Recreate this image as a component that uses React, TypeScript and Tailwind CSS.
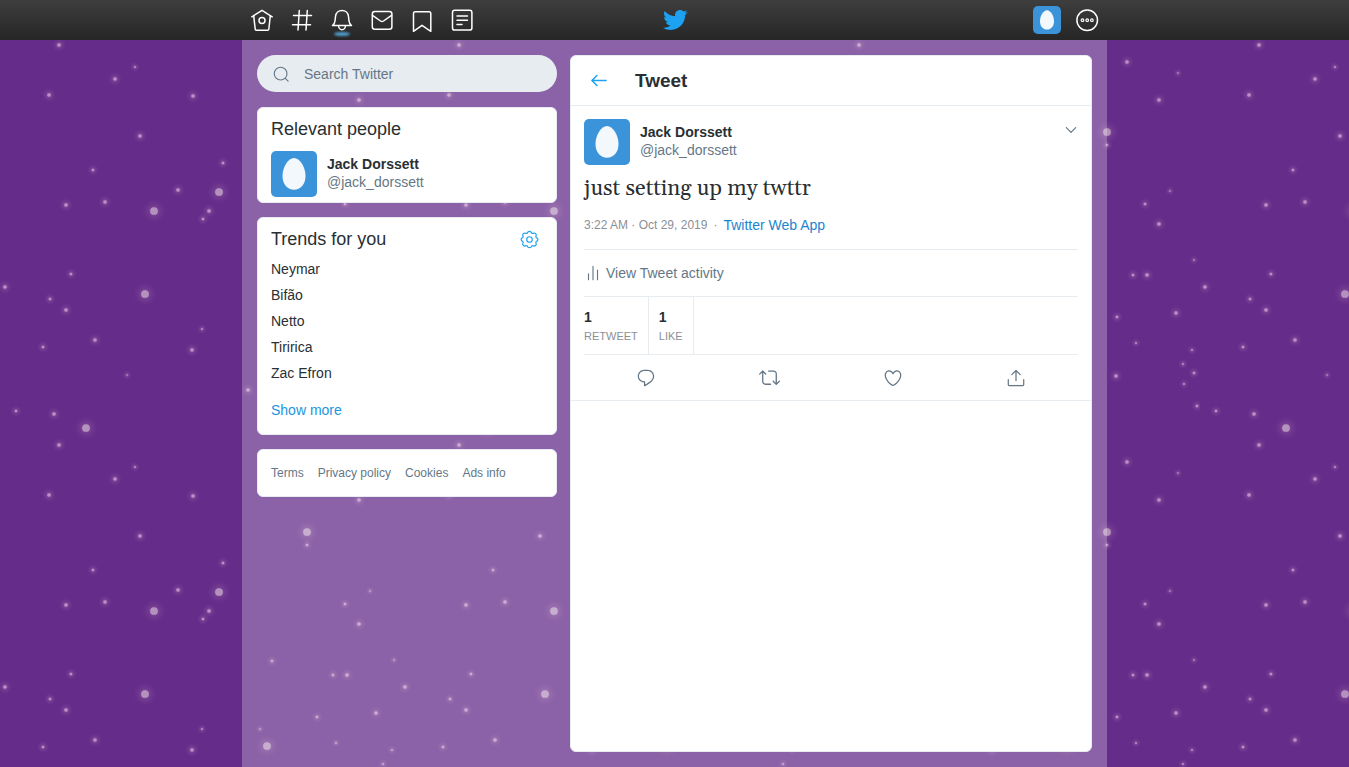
import type { ReactNode } from "react";

const STARS: [number, number, number][] = [
  [59, 45, 2], [135, 67, 1], [115, 79, 2], [49, 95, 2], [193, 96, 2], [140, 136, 2],
  [223, 163, 1.5], [93, 170, 1.5], [178, 190, 2], [219, 192, 4.3], [66, 205, 2],
  [105, 202, 2], [154, 211, 4.3], [209, 211, 2], [203, 219, 1.5], [71, 274, 1.5],
  [5, 287, 2], [145, 294, 4.3], [50, 299, 1.5], [66, 310, 2], [202, 329, 1],
  [95, 340, 2], [43, 347, 1.5], [192, 350, 2], [127, 375, 0.8], [16, 11, 1.5],
  [54, 14, 2], [86, 28, 4.3], [327, 62, 2], [378, 73, 0.8], [359, 100, 2],
  [307, 132, 4.3], [307, 145, 1.5], [370, 191, 0.8], [345, 204, 1.5], [359, 224, 2],
  [394, 260, 0.8], [333, 275, 1.5], [347, 275, 2], [317, 317, 1.5], [376, 313, 2],
  [336, 343, 1], [392, 350, 1], [383, 364, 1], [394, 373, 1.5], [384, 384, 1],
  [316, 376, 2], [397, 6, 1.5], [272, 261, 1.5], [260, 329, 0.8], [267, 346, 4.3],
  [248, 390, 2],
];

function StarField() {
  return (
    <svg aria-hidden="true" className="absolute inset-0 h-full w-full">
      <defs>
        <radialGradient id="glow">
          <stop offset="0" stopColor="#c89fc8" stopOpacity="0.55" />
          <stop offset="0.45" stopColor="#b07fb0" stopOpacity="0.18" />
          <stop offset="1" stopColor="#a070a0" stopOpacity="0" />
        </radialGradient>
        <pattern id="stars" width="400" height="400" patternUnits="userSpaceOnUse">
          {STARS.map(([x, y, r]) => (
            <g key={`${x}-${y}`}>
              <circle cx={x} cy={y} r={r * 2 + 3} fill="url(#glow)" />
              <circle cx={x} cy={y} r={r * 0.9} fill={r > 3 ? "#b592be" : "#bd8ec9"} />
            </g>
          ))}
        </pattern>
      </defs>
      <rect width="100%" height="100%" fill="url(#stars)" />
    </svg>
  );
}

function Line({ children, className, width = 1.5 }: { children: ReactNode; className: string; width?: number }) {
  return (
    <svg viewBox="0 0 24 24" aria-hidden="true" className={className} fill="none" stroke="currentColor" strokeWidth={width} strokeLinecap="round" strokeLinejoin="round">
      {children}
    </svg>
  );
}

function Solid({ d, className }: { d: string; className: string }) {
  return (
    <svg viewBox="0 0 24 24" aria-hidden="true" className={className} fill="currentColor">
      <path d={d} />
    </svg>
  );
}

const BIRD =
  "M23.643 4.937c-.835.37-1.732.62-2.675.733.962-.576 1.7-1.49 2.048-2.578-.9.534-1.897.922-2.958 1.13-.85-.904-2.06-1.47-3.4-1.47-2.572 0-4.658 2.086-4.658 4.66 0 .364.042.718.12 1.06-3.873-.195-7.304-2.05-9.602-4.868-.4.69-.63 1.49-.63 2.342 0 1.616.823 3.043 2.072 3.878-.764-.025-1.482-.234-2.11-.583v.06c0 2.257 1.605 4.14 3.737 4.568-.392.106-.803.162-1.227.162-.3 0-.593-.028-.877-.082.593 1.85 2.313 3.198 4.352 3.234-1.595 1.25-3.604 1.995-5.786 1.995-.376 0-.747-.022-1.112-.065 2.062 1.323 4.51 2.093 7.14 2.093 8.57 0 13.255-7.098 13.255-13.254 0-.2-.005-.402-.014-.602.91-.658 1.7-1.477 2.323-2.41z";
const REPLY =
  "M14.046 2.242l-4.148-.01h-.002c-4.374 0-7.8 3.427-7.8 7.802 0 4.098 3.186 7.206 7.465 7.37v3.828c0 .108.044.286.12.403.142.225.384.347.632.347.138 0 .277-.038.402-.118.264-.168 6.473-4.14 8.088-5.506 1.902-1.61 3.04-3.97 3.043-6.312v-.017c-.006-4.367-3.43-7.787-7.8-7.788zm3.787 12.972c-1.134.96-4.862 3.405-6.772 4.643V16.67c0-.414-.335-.75-.75-.75h-.396c-3.66 0-6.318-2.476-6.318-5.886 0-3.534 2.768-6.302 6.3-6.302l4.147.01h.002c3.532 0 6.3 2.766 6.302 6.296-.003 1.91-.942 3.844-2.514 5.176z";
const RETWEET =
  "M23.77 15.67c-.292-.293-.767-.293-1.06 0l-2.22 2.22V7.65c0-2.068-1.683-3.75-3.75-3.75h-5.85c-.414 0-.75.336-.75.75s.336.75.75.75h5.85c1.24 0 2.25 1.01 2.25 2.25v10.24l-2.22-2.22c-.293-.293-.768-.293-1.06 0s-.294.768 0 1.06l3.5 3.5c.145.147.337.22.53.22s.383-.072.53-.22l3.5-3.5c.294-.292.294-.767 0-1.06zm-10.66 3.28H7.26c-1.24 0-2.25-1.01-2.25-2.25V6.46l2.22 2.22c.148.147.34.22.532.22s.384-.073.53-.22c.293-.293.293-.768 0-1.06l-3.5-3.5c-.293-.294-.768-.294-1.06 0l-3.5 3.5c-.294.292-.294.767 0 1.06s.767.293 1.06 0l2.22-2.22V16.7c0 2.068 1.683 3.75 3.75 3.75h5.85c.414 0 .75-.336.75-.75s-.337-.75-.75-.75z";
const HEART =
  "M12 21.638h-.014C9.403 21.59 1.95 14.856 1.95 8.478c0-3.064 2.525-5.754 5.403-5.754 2.29 0 3.83 1.58 4.646 2.73.814-1.148 2.354-2.73 4.645-2.73 2.88 0 5.404 2.69 5.404 5.755 0 6.376-7.454 13.11-10.037 13.157H12zM7.354 4.225c-2.08 0-3.903 1.988-3.903 4.255 0 5.74 7.034 11.596 8.55 11.658 1.518-.062 8.55-5.917 8.55-11.658 0-2.267-1.823-4.255-3.903-4.255-2.528 0-3.94 2.936-3.952 2.965-.23.562-1.156.562-1.387 0-.014-.03-1.425-2.965-3.954-2.965z";
const SHARE =
  "M17.53 7.47l-5-5c-.293-.293-.768-.293-1.06 0l-5 5c-.294.293-.294.768 0 1.06s.767.294 1.06 0l3.72-3.72V15c0 .414.336.75.75.75s.75-.336.75-.75V4.81l3.72 3.72c.146.147.338.22.53.22s.384-.072.53-.22c.293-.293.293-.767 0-1.06zM19.708 21.944H4.292C3.028 21.944 2 20.916 2 19.652V14c0-.414.336-.75.75-.75s.75.336.75.75v5.652c0 .437.355.792.792.792h15.416c.437 0 .792-.355.792-.792V14c0-.414.336-.75.75-.75s.75.336.75.75v5.652c0 1.264-1.028 2.292-2.292 2.292z";

function Egg({ className }: { className: string }) {
  return (
    <svg viewBox="0 0 46 46" aria-hidden="true" className={className}>
      <rect width="46" height="46" fill="#3b94d9" />
      <path d="M23 7C28.500 7 34.500 15.500 34.500 25C34.500 33.500 29.500 38.700 23 38.700C16.500 38.700 11.500 33.500 11.500 25C11.500 15.500 17.500 7 23 7Z" fill="#f3f8fd" />
    </svg>
  );
}

const NAV: { label: string; active?: boolean; icon: ReactNode }[] = [
  {
    label: "Home",
    icon: (
      <>
        <path d="M1.800 8.800 12 2.300l10.200 6.500" />
        <path d="M3.700 7.800 5.200 21.200q.1 1 1.100 1h11.400q1 0 1.100-1L20.300 7.800" />
        <circle cx="12" cy="12.600" r="3" />
      </>
    ),
  },
  { label: "Explore", icon: <path d="M3.500 7.500h18M2.500 16.800h18M9.300 2.500 8 22M17.300 2.500 16 22" /> },
  {
    label: "Notifications",
    active: true,
    icon: (
      <>
        <path d="M2.500 17.600h19c-1.700-1.400-2.300-2.600-2.500-4.600l-.5-4.500C18.100 4.900 15.400 2.500 12 2.500S5.900 4.900 5.500 8.500L5 13c-.2 2-.8 3.200-2.500 4.600Z" />
        <path d="M8.600 17.800a3.400 4 0 0 0 6.800 0" />
      </>
    ),
  },
  {
    label: "Messages",
    icon: (
      <>
        <rect x="2.300" y="3.500" width="19.600" height="17.800" rx="2.500" />
        <path d="m2.500 7.300 8 5.700q1.500 1 3 0l8-5.700" />
      </>
    ),
  },
  { label: "Bookmarks", icon: <path d="M5.200 3.800h13.800q1.800 0 1.800 1.800V23.300L12 17.300 3.500 23.300V5.600q0-1.800 1.700-1.800Z" /> },
  {
    label: "Lists",
    icon: (
      <>
        <rect x="2.500" y="2.300" width="19.400" height="19.800" rx="2.200" />
        <path d="M7 8h10.500M7 12.300h10.500M7 16.600h5" />
      </>
    ),
  },
];

function Person() {
  return (
    <a href="#profile" className="flex gap-2.5">
      <Egg className="h-[46px] w-[46px] shrink-0 rounded-[5px]" />
      <span className="flex flex-col pt-1 text-sm leading-[18px]">
        <span className="font-bold text-[#292f33]">Jack Dorssett</span>
        <span className="text-[#657786]">@jack_dorssett</span>
      </span>
    </a>
  );
}

function Card({ children, className }: { children: ReactNode; className: string }) {
  return <section className={`rounded-md border border-[#e6ecf0] bg-white px-[13px] ${className}`}>{children}</section>;
}

export default function App() {
  return (
    <div className="relative flex min-h-screen flex-col bg-[#652c8a] font-['Liberation_Sans',Arial,sans-serif] text-sm text-[#292f33]">
      <StarField />

      <header className="relative h-10 bg-linear-to-b from-[#3e3e3e] to-[#262626] text-white">
        <div className="mx-auto grid h-full max-w-[865px] grid-cols-[1fr_auto_1fr] items-center">
          <nav aria-label="Main" className="flex">
            {NAV.map((item) => (
              <a key={item.label} href={`#${item.label.toLowerCase()}`} aria-label={item.label} className="relative flex h-10 w-10 items-center justify-center">
                <Line className="h-6 w-6">{item.icon}</Line>
                {item.active && <span className="absolute bottom-1 h-1 w-4 rounded-[50%] bg-[#4f9bcb] blur-[1px]" />}
              </a>
            ))}
          </nav>
          <a href="#twitter" aria-label="Twitter">
            <Solid d={BIRD} className="h-[26px] w-[26px] text-[#1da1f2]" />
          </a>
          <div className="flex justify-end">
            <button type="button" aria-label="Account" className="flex h-10 w-10 items-center justify-center">
              <Egg className="h-7 w-7 rounded-[5px]" />
            </button>
            <button type="button" aria-label="More" className="flex h-10 w-10 items-center justify-center">
              <Line className="h-6 w-6">
                <circle cx="12.200" cy="12.200" r="10.300" />
                <g strokeWidth="1.200">
                  <circle cx="7.500" cy="12.200" r="1.300" />
                  <circle cx="12.200" cy="12.200" r="1.300" />
                  <circle cx="16.900" cy="12.200" r="1.300" />
                </g>
              </Line>
            </button>
          </div>
        </div>
      </header>

      <div className="relative mx-auto flex w-full max-w-[865px] flex-1 gap-[13px] bg-white/25 p-[15px]">
        <aside className="flex w-[300px] shrink-0 flex-col gap-3.5">
          <label className="mb-px flex h-[37px] items-center gap-3.5 rounded-full bg-[#e6ecf0] px-[15px] text-[#657786]">
            <Line className="h-[18px] w-[18px] shrink-0">
              <circle cx="11.500" cy="11.500" r="8.500" />
              <path d="m17.800 17.800 3.700 3.700" />
            </Line>
            <input type="search" aria-label="Search Twitter" placeholder="Search Twitter" className="min-w-0 flex-1 bg-transparent outline-none placeholder:text-[#657786]" />
          </label>

          <Card className="pt-[9px] pb-[5px]">
            <h2 className="mb-2.5 text-lg leading-6">Relevant people</h2>
            <Person />
          </Card>

          <Card className="pt-[9px] pb-3">
            <div className="mb-[5px] flex items-center justify-between pr-1">
              <h2 className="text-lg leading-6">Trends for you</h2>
              <button type="button" aria-label="Trend settings" className="text-[#1da1f2]">
                <Line className="h-[19px] w-[19px]">
                  <path d="M10 2.500q2-1.600 4 0l.8 1.500q.7.500 1.600.300l1.700-.5q2.300.200 2.500 2.500l-.5 1.700q-.1.900.4 1.500l1.400.9q1.300 1.600 0 3.300l-1.400.9q-.6.700-.4 1.600l.5 1.700q-.3 2.200-2.500 2.400l-1.700-.5q-.9-.1-1.600.4l-.8 1.400q-2 1.500-4 0l-.8-1.400q-.7-.5-1.600-.4l-1.700.5q-2.200-.2-2.500-2.400l.5-1.700q.2-.9-.4-1.600l-1.400-.9q-1.300-1.700 0-3.300l1.400-.9q.6-.6.4-1.500l-.5-1.700q.2-2.300 2.500-2.500l1.700.5q.9.200 1.600-.3Z" />
                  <circle cx="12" cy="12" r="3.500" />
                </Line>
              </button>
            </div>
            <ul>
              {["Neymar", "Bifão", "Netto", "Tiririca", "Zac Efron"].map((trend) => (
                <li key={trend}>
                  <a href="#trend" className="leading-[26px]">{trend}</a>
                </li>
              ))}
            </ul>
            <a href="#trends" className="mt-3 block leading-6 text-[#1b95e0]">Show more</a>
          </Card>

          <Card className="flex gap-3.5 py-[13px] text-xs leading-5 text-[#657786]">
            <a href="#terms">Terms</a>
            <a href="#privacy">Privacy policy</a>
            <a href="#cookies">Cookies</a>
            <a href="#ads">Ads info</a>
          </Card>
        </aside>

        <main className="min-w-0 flex-1 rounded-md border border-[#e6ecf0] bg-white">
          <div className="flex h-[50px] items-center gap-[26px] border-b border-[#e6ecf0] px-[18px]">
            <button type="button" aria-label="Back" className="text-[#1da1f2]">
              <Line className="h-5 w-5" width={1.8}>
                <path d="M20.500 11.500H3.500M9.500 5.500l-6 6 6 6" />
              </Line>
            </button>
            <h1 className="text-[19px] font-bold">Tweet</h1>
          </div>

          <article className="border-b border-[#e6ecf0] px-[13px] pt-[13px]">
            <div className="flex items-start justify-between">
              <Person />
              <button type="button" aria-label="Tweet options" className="mt-1 text-[#657786]">
                <Line className="h-3.5 w-3.5" width={2}>
                  <path d="m4 8 8 8 8-8" />
                </Line>
              </button>
            </div>
            <p className="mt-2 font-[Georgia,Gelasio,'Liberation_Serif',serif] text-[22px] leading-8">just setting up my twttr</p>
            <p className="mt-2.5 mb-3.5 flex items-center gap-1.5 text-xs leading-5 text-[#8a9096]">
              <span>3:22 AM · Oct 29, 2019</span>
              <span>·</span>
              <a href="#source" className="text-sm text-[#1b85d0]">Twitter Web App</a>
            </p>
            <a href="#activity" className="flex h-[47px] items-center gap-1 border-t border-[#e6ecf0] text-[#657786]">
              <Line className="h-[18px] w-[18px]">
                <path d="M6 21v-8M12 21V3M18 21V8" />
              </Line>
              View Tweet activity
            </a>
            <div className="flex h-[59px] border-y border-[#e6ecf0]">
              {["Retweet", "Like"].map((label, i) => (
                <a key={label} href={`#${label.toLowerCase()}s`} className={`flex flex-col border-r border-[#e6ecf0] pt-2.5 pr-2.5 ${i ? "pl-2.5" : ""}`}>
                  <b className="leading-5">1</b>
                  <span className="text-[11px] leading-[18px] text-[#8a9096] uppercase">{label}</span>
                </a>
              ))}
            </div>
            <div className="grid h-[45px] grid-cols-4 place-items-center text-[#657786]">
              <button type="button" aria-label="Reply"><Solid d={REPLY} className="h-5 w-5" /></button>
              <button type="button" aria-label="Retweet"><Solid d={RETWEET} className="h-[21px] w-[21px]" /></button>
              <button type="button" aria-label="Like"><Solid d={HEART} className="h-5 w-5" /></button>
              <button type="button" aria-label="Share"><Solid d={SHARE} className="h-5 w-5" /></button>
            </div>
          </article>
        </main>
      </div>
    </div>
  );
}
